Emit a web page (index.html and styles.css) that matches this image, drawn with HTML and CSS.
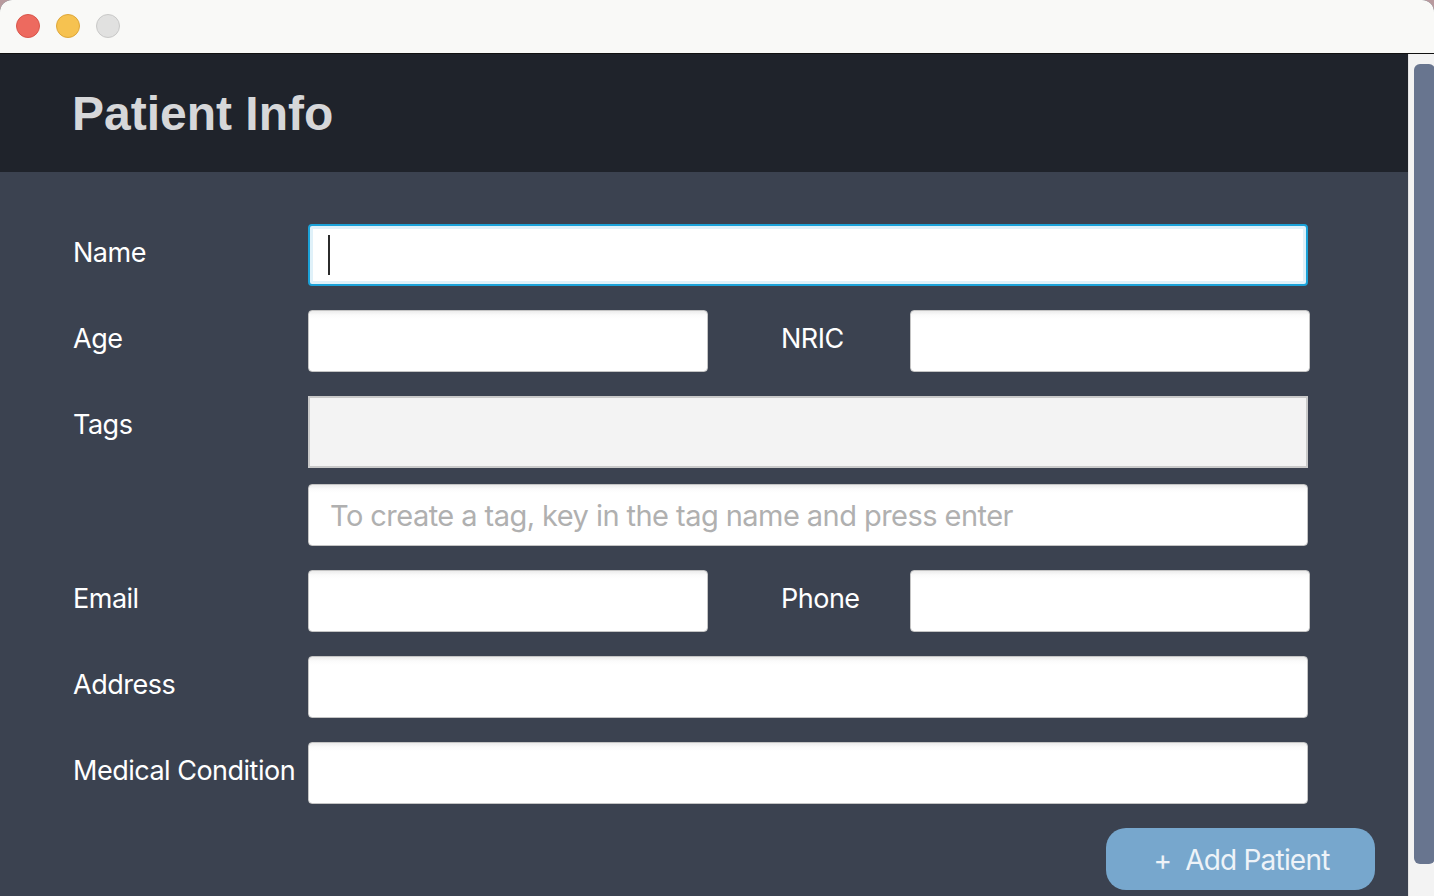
FILE: index.html
```html
<!DOCTYPE html>
<html>
<head>
<meta charset="utf-8">
<link rel="stylesheet" href="styles.css">
</head>
<body>
<div class="window">
  <div class="titlebar">
    <span class="light red"></span>
    <span class="light yellow"></span>
    <span class="light grey"></span>
  </div>
  <div class="main">
    <div class="content">
      <div class="header"><h1 class="title">Patient Info</h1></div>
      <div class="form">
        <div class="row">
          <div class="label">Name</div>
          <div class="field full focused"><span class="caret"></span></div>
        </div>
        <div class="row">
          <div class="label">Age</div>
          <div class="field half"></div>
          <div class="label mid">NRIC</div>
          <div class="field half"></div>
        </div>
        <div class="row tags-row">
          <div class="label">Tags</div>
          <div class="tags-col">
            <div class="tagbox"></div>
            <div class="field full placeholder">To create a tag, key in the tag name and press enter</div>
          </div>
        </div>
        <div class="row">
          <div class="label">Email</div>
          <div class="field half"></div>
          <div class="label mid">Phone</div>
          <div class="field half"></div>
        </div>
        <div class="row">
          <div class="label">Address</div>
          <div class="field full"></div>
        </div>
        <div class="row">
          <div class="label">Medical Condition</div>
          <div class="field full"></div>
        </div>
        <div class="actions">
          <button class="add-btn"><span class="plus">+</span>Add Patient</button>
        </div>
      </div>
    </div>
    <div class="scrollbar"><div class="thumb"></div></div>
  </div>
</div>
</body>
</html>
```
FILE: styles.css
```css
html, body {
  margin: 0;
  padding: 0;
  height: 100%;
  overflow: hidden;
  background: #b89a9e;
}
.window {
  width: 1434px;
  height: 896px;
  display: flex;
  flex-direction: column;
  border-top-left-radius: 12px;
  border-top-right-radius: 12px;
  overflow: hidden;
  background: #3b4250;
}
.titlebar {
  height: 53px;
  background: #f9f9f7;
  border-bottom: 1px solid #111;
  display: flex;
  align-items: center;
  padding-left: 16px;
  gap: 16px;
  box-sizing: content-box;
  flex-shrink: 0;
}
.light {
  width: 22px;
  height: 22px;
  border-radius: 50%;
  margin-top: -1px;
}
.red { background: #ed6a5f; border: 1px solid #d9564b; }
.yellow { background: #f6c250; border: 1px solid #dea73a; }
.grey { background: #e1e1e0; border: 1px solid #c9c9c8; }

.main {
  flex: 1;
  display: flex;
  min-height: 0;
}
.content {
  width: 1408px;
  display: flex;
  flex-direction: column;
  background: #3b4250;
}
.header {
  height: 118px;
  background: #1f232b;
  display: flex;
  align-items: center;
  padding-left: 72px;
  flex-shrink: 0;
}
.title {
  margin: 0;
  font-family: "Liberation Sans", Arial, sans-serif;
  font-weight: bold;
  font-size: 48px;
  color: #d6d7d9;
  margin-top: 0;
}
.form {
  padding: 52px 33px 0 73px;
  display: flex;
  flex-direction: column;
  gap: 24px;
  font-family: Inter, "Noto Sans", sans-serif;
}
.row {
  display: flex;
  align-items: flex-start;
}
.label {
  width: 235px;
  flex-shrink: 0;
  height: 58px;
  line-height: 58px;
  color: #ffffff;
  font-size: 27px;
  letter-spacing: -0.5px;
  white-space: nowrap;
}
.label.mid {
  width: 129px;
  margin-left: 73px;
}
.field {
  height: 62px;
  box-sizing: border-box;
  background: linear-gradient(#ececec 0, #fbfbfb 4px, #ffffff 8px);
  border: 1px solid #c4c4c4;
  border-radius: 4px;
  position: relative;
}
.field.full { width: 1000px; }
.field.half { width: 400px; }
.field.focused {
  border: 2px solid #1ba2d8;
  box-shadow: inset 0 0 0 3px #e0f1f9;
  background: #ffffff;
}
.caret {
  position: absolute;
  left: 18px;
  top: 9px;
  width: 2px;
  height: 40px;
  background: #2b2b2b;
}
.placeholder {
  color: #b0b0b0;
  font-size: 29px;
  letter-spacing: -0.55px;
  line-height: 62px;
  padding-left: 21px;
  white-space: nowrap;
}
.tags-col {
  display: flex;
  flex-direction: column;
  gap: 16px;
}
.tagbox {
  width: 1000px;
  height: 72px;
  box-sizing: border-box;
  background: #f3f3f3;
  border: 2px solid #c9c9c9;
}
.actions {
  display: flex;
  justify-content: flex-end;
}
.add-btn {
  width: 269px;
  height: 62px;
  border: none;
  border-radius: 20px;
  background: #77a7cd;
  color: #eef3f8;
  font-family: Inter, "Noto Sans", sans-serif;
  font-size: 28px;
  letter-spacing: -0.8px;
  display: flex;
  align-items: center;
  justify-content: center;
  padding: 0;
  padding-left: 2px;
  padding-top: 2px;
}
.plus {
  font-size: 28px;
  margin-right: 14px;
}
.scrollbar {
  width: 26px;
  background: #f3f3f3;
  border-left: 1px solid #e4e4e4;
  box-sizing: border-box;
  padding: 10px 0 0 5px;
}
.thumb {
  width: 21px;
  height: 800px;
  background: #68758f;
  border-radius: 6px;
}
```
